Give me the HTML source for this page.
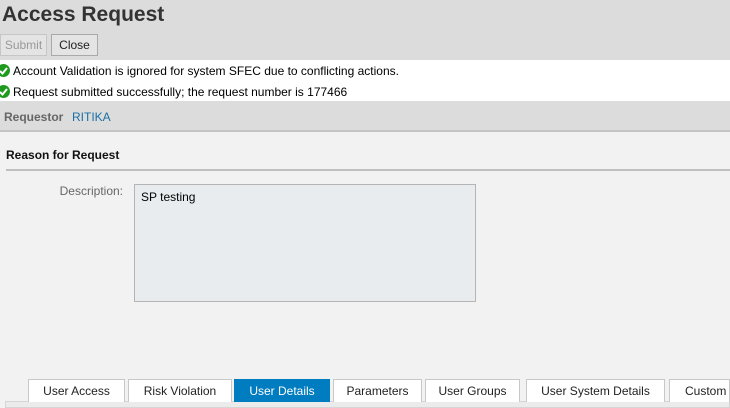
<!DOCTYPE html>
<html style="overflow:hidden;width:730px;height:408px"><head><style>
*{margin:0;padding:0;box-sizing:border-box}
body{width:730px;height:408px;overflow:hidden;background:#f2f2f2;font-family:"Liberation Sans",Arial,sans-serif;font-size:12px;color:#000;position:relative}
.abs{position:absolute}
.hdr{left:0;top:0;width:730px;height:60px;background:#dcdcdc}
h1{position:absolute;left:2px;top:3px;font-size:21px;font-weight:bold;color:#333}
.btn{position:absolute;top:34px;height:22px;border:1px solid #a9a9a9;background:#e4e4e4;font-size:12px;line-height:20px;text-align:center}
.msg{left:0;top:60px;width:730px;height:41px;background:#fff}
.m{position:absolute;left:0;height:20px;line-height:20px;padding-left:13px;white-space:nowrap}
.ic{position:absolute;left:-3px;top:3px;width:13px;height:13px;border-radius:50%;background:#1e9a1e}
.ic svg{position:absolute;left:0;top:0}
.req{left:0;top:101px;width:730px;height:31px;background:#dcdcdc;border-bottom:2px solid #c4c4c4}
.tab{position:absolute;top:379px;height:23px;background:#fff;border:1px solid #c8c8c8;border-bottom:none;text-align:center;line-height:22px;font-size:12px;color:#222;white-space:nowrap;overflow:hidden}
</style></head><body>
<div class="abs hdr"></div>
<h1>Access Request</h1>
<div class="btn" style="left:0;width:47px;color:#999;border-color:#c6c6c6">Submit</div>
<div class="btn" style="left:51px;width:47px;color:#222">Close</div>
<div class="abs msg">
<div class="m" style="top:1px"><span class="ic"><svg width="13" height="13"><path d="M3 7l2.5 2.5L10 4" stroke="#fff" stroke-width="2" fill="none"/></svg></span>Account Validation is ignored for system SFEC due to conflicting actions.</div>
<div class="m" style="top:22px"><span class="ic"><svg width="13" height="13"><path d="M3 7l2.5 2.5L10 4" stroke="#fff" stroke-width="2" fill="none"/></svg></span>Request submitted successfully; the request number is 177466</div>
</div>
<div class="abs req"></div>
<div class="abs" style="left:4px;top:110px;font-weight:bold;color:#666">Requestor</div>
<div class="abs" style="left:72px;top:110px;color:#1a6fa6">RITIKA</div>
<div class="abs" style="left:6px;top:148px;font-weight:bold;color:#111">Reason for Request</div>
<div class="abs" style="left:6px;top:169px;width:724px;height:2px;background:#c0c0c0"></div>
<div class="abs" style="left:0;top:184px;width:123px;text-align:right;color:#666">Description:</div>
<div class="abs" style="left:134px;top:184px;width:342px;height:118px;background:#e8ecef;border:1px solid #b5b5b5;padding:5px 6px">SP testing</div>
<div class="abs" style="left:5px;top:401px;width:725px;height:7px;background:#ebebeb;border:1px solid #d5d5d5"></div>
<div class="tab" style="left:28px;width:97px">User Access</div>
<div class="tab" style="left:128px;width:104px">Risk Violation</div>
<div class="tab" style="left:234px;width:96px;background:#007cc0;border-color:#007cc0;color:#fff">User Details</div>
<div class="tab" style="left:333px;width:89px">Parameters</div>
<div class="tab" style="left:425px;width:95px">User Groups</div>
<div class="tab" style="left:526px;width:139px">User System Details</div>
<div class="tab" style="left:669px;width:61px;text-align:left;padding-left:15px">Custom Fields</div>
</body></html>
